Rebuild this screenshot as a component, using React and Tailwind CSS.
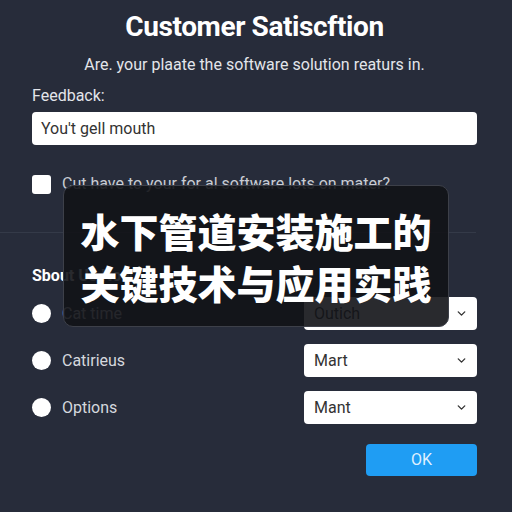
import { ChevronDown } from 'lucide-react';

const rows = [
  { label: 'Cat time', value: 'Outich' },
  { label: 'Catirieus', value: 'Mart' },
  { label: 'Options', value: 'Mant' },
];

const App = () => {
  return (
    <div
      className="relative h-[512px] w-[512px] overflow-hidden bg-[#272c3a] text-[#e9ebef]"
      style={{ fontFamily: 'Roboto, "Noto Sans", sans-serif' }}
    >
      <div className="flex flex-col pl-8 pr-[35px] pt-[11px]">
        <h1 className="text-center text-[28px] font-bold leading-8 tracking-[-0.4px] text-white">
          Customer Satiscftion
        </h1>
        <p className="mt-[10px] text-center text-base leading-6 text-[#e3e5ea]">
          Are. your plaate the software solution reaturs in.
        </p>
        <label className="mt-[7px] text-base leading-6 text-[#e3e5ea]">Feedback:</label>
        <div className="mt-1 flex h-[33px] items-center rounded-[4px] bg-white px-[9px] text-base text-[#333]">
          You't gell mouth
        </div>

        <div className="mt-[27px] flex h-6 items-center gap-[11px]">
          <span className="h-[19px] w-[19px] rounded-[3px] bg-white" />
          <span className="text-base text-[#c9ccd3]">Cut have to your for al software lots on mater?</span>
        </div>
      </div>

      <div className="mt-[36px] h-px w-[476px] bg-[#343a48]" />

      <div className="flex flex-col pl-8 pr-[35px]">
        <p className="mt-[31px] text-base font-bold leading-6 text-white">Sbout Us Now</p>

        <div className="mt-[9px] flex flex-col gap-[14px]">
          {rows.map((row) => (
            <div key={row.label} className="flex h-[33px] items-center">
              <span className="h-[19px] w-[19px] rounded-full bg-white" />
              <span className="ml-[11px] flex-1 text-base text-[#d5d8de]">{row.label}</span>
              <div className="flex h-[33px] w-[173px] items-center justify-between rounded-[4px] bg-white pl-[10px] pr-[9px] text-base text-[#333]">
                <span>{row.value}</span>
                <ChevronDown size={13} strokeWidth={2.5} className="text-[#333]" />
              </div>
            </div>
          ))}
        </div>

        <div className="mt-5 flex justify-end">
          <button className="h-8 w-[111px] rounded-[4px] bg-[#1f9df3] text-base text-[#dff0ff]">OK</button>
        </div>
      </div>

      <div className="absolute left-[63px] top-[185px] flex h-[142px] w-[386px] items-center justify-center rounded-[10px] border border-[#3d4049] bg-[#121317]/90">
        <p
          className="text-center text-[39px] font-black leading-[52px] text-white"
          style={{ fontFamily: '"Noto Sans CJK SC", sans-serif' }}
        >
          水下管道安装施工的
          <br />
          关键技术与应用实践
        </p>
      </div>
    </div>
  );
};

export default App;
